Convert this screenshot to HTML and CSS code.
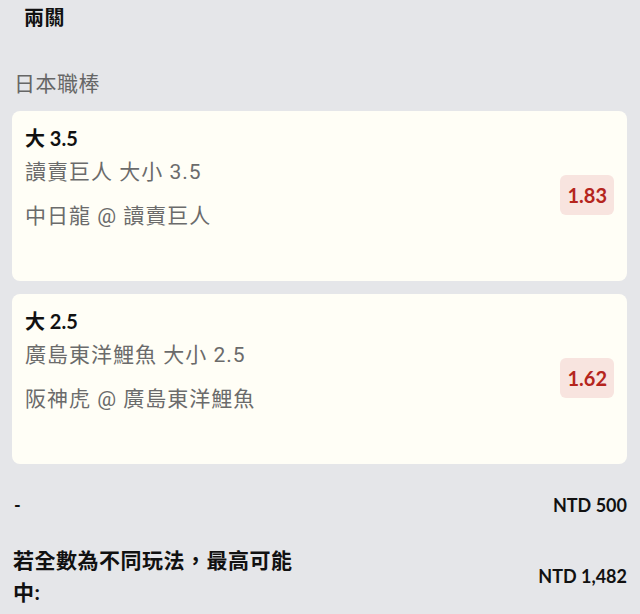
FILE: index.html
```html
<!DOCTYPE html>
<html lang="zh-Hant">
<head>
<meta charset="utf-8">
<link rel="stylesheet" href="styles.css">
</head>
<body>
<div class="page">
  <div class="title">兩關</div>
  <div class="league">日本職棒</div>
  <div class="cards">
    <div class="card">
      <div class="info">
        <div class="pick">大 3.5</div>
        <div class="market">讀賣巨人 大小 3.5</div>
        <div class="match">中日龍 @ 讀賣巨人</div>
      </div>
      <div class="odds">1.83</div>
    </div>
    <div class="card">
      <div class="info">
        <div class="pick">大 2.5</div>
        <div class="market">廣島東洋鯉魚 大小 2.5</div>
        <div class="match">阪神虎 @ 廣島東洋鯉魚</div>
      </div>
      <div class="odds">1.62</div>
    </div>
  </div>
  <div class="row stake">
    <div class="label">-</div>
    <div class="amount">NTD 500</div>
  </div>
  <div class="row payout">
    <div class="label long">若全數為不同玩法，最高可能中:</div>
    <div class="amount">NTD 1,482</div>
  </div>
</div>
</body>
</html>
```

FILE: styles.css
```css
html, body {
  margin: 0;
  padding: 0;
  background: #e5e6e9;
}
body {
  font-family: Lato, "Noto Sans CJK TC", sans-serif;
  color: #111;
}
.page {
  width: 640px;
  height: 614px;
  overflow: hidden;
  padding: 0 13px 0 12px;
  box-sizing: border-box;
}
.title {
  font-size: 20px;
  font-weight: 700;
  line-height: 28px;
  padding: 3px 0 0 12px;
  color: #111;
  letter-spacing: 0.5px;
}
.league {
  font-size: 21px;
  line-height: 28px;
  color: #666;
  margin-top: 38px;
  padding-left: 2px;
  letter-spacing: 0.5px;
}
.cards {
  display: flex;
  flex-direction: column;
  gap: 13px;
  margin-top: 14px;
}
.card {
  background: #fffef6;
  border-radius: 8px;
  height: 170px;
  box-sizing: border-box;
  padding: 13px 13px 0 13px;
  display: flex;
  justify-content: space-between;
  align-items: flex-start;
}
.pick {
  font-size: 20px;
  font-weight: 700;
  line-height: 28px;
  color: #111;
}
.market, .match {
  font-family: Roboto, "Noto Sans CJK TC", sans-serif;
  font-size: 21px;
  line-height: 28px;
  color: #6b6b6b;
  letter-spacing: 1px;
}
.market { margin-top: 6px; }
.match { margin-top: 16px; }
.odds {
  margin-top: 51px;
  background: #f8e4df;
  color: #b5251d;
  font-size: 20px;
  font-weight: 700;
  line-height: 40px;
  padding: 0 7px;
  border-radius: 6px;
}
.row {
  display: flex;
  justify-content: space-between;
  align-items: center;
  font-weight: 700;
}
.stake {
  margin-top: 28px;
  padding-left: 2px;
}
.stake .label {
  font-size: 18px;
  line-height: 26px;
}
.amount {
  font-size: 18px;
  line-height: 26px;
  font-weight: 700;
}
.payout {
  margin-top: 26px;
  padding-left: 1px;
}
.payout .label {
  width: 296px;
  font-size: 21px;
  line-height: 32px;
  letter-spacing: 0.5px;
}
```
